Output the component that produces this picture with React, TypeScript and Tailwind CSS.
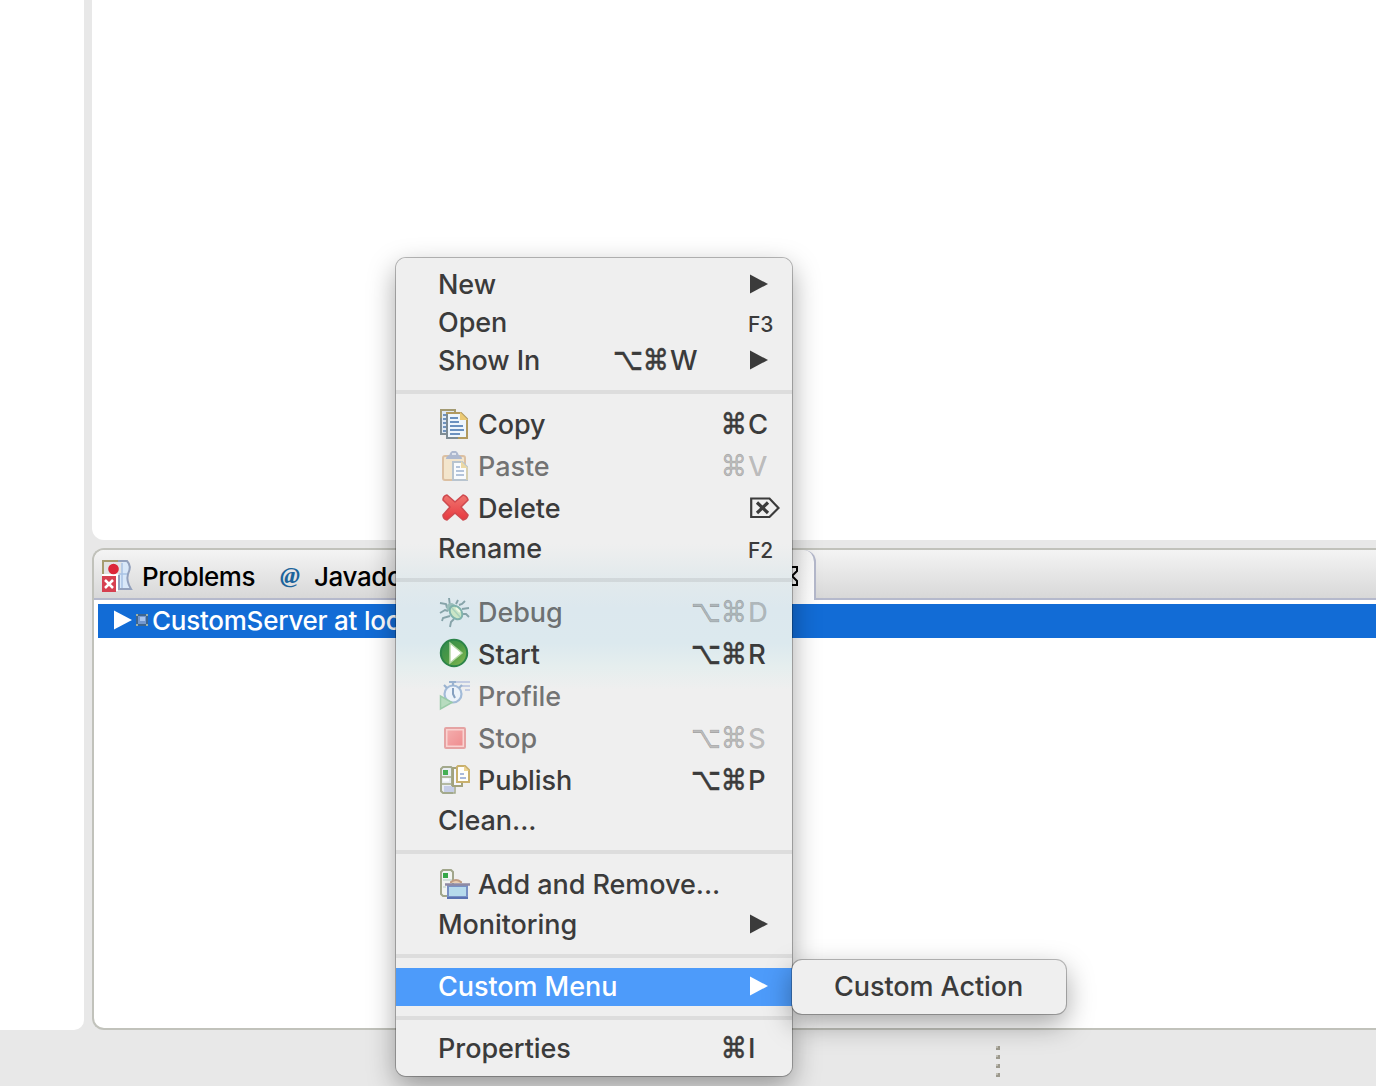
import type { ReactNode } from "react";

const CopyIcon = () => (
  <svg width="32" height="32" viewBox="0 0 32 32" fill="none">
    <path d="M3 2H17V26H3Z" fill="#dfe9f5" stroke="#a39a72" strokeWidth="2" />
    <path d="M3 10V26H9" stroke="#7f8d94" strokeWidth="2" />
    <path d="M5 7h3M5 11h3M5 15h3M5 19h3M5 23h3" stroke="#6f93bd" strokeWidth="2" />
    <path d="M9 5H23L29 11V30H9Z" fill="#eef6fd" stroke="#b19a60" strokeWidth="2" />
    <path d="M9 6V30H20" stroke="#7d8b93" strokeWidth="2" />
    <path d="M22 4L30 12H22Z" fill="#ecca74" />
    <path d="M12 10h8M12 14h9M12 18h13M12 22h14M12 26h10" stroke="#6a91c0" strokeWidth="2" />
  </svg>
);

const PasteIcon = () => (
  <svg width="32" height="32" viewBox="0 0 32 32" fill="none">
    <rect x="5" y="6" width="22" height="24" rx="2" fill="#f3e5cc" stroke="#dcc0a2" strokeWidth="2" />
    <path d="M8 9C8 5 12 6 12 3L14 1H18L20 3C20 6 24 5 24 9Z" fill="#aeb9cf" />
    <rect x="14" y="3" width="4" height="2" fill="#dfe4ee" />
    <path d="M15 12H24L29 17V30H15Z" fill="#f9fbfd" stroke="#b8c4cf" strokeWidth="2" />
    <path d="M29 18V30" stroke="#d6cfb0" strokeWidth="2" />
    <path d="M23 11L30 18H23Z" fill="#ecd9a4" />
    <path d="M18 17h4M18 21h8M18 25h8" stroke="#b4c4da" strokeWidth="2" />
  </svg>
);

const DeleteIcon = () => (
  <svg width="32" height="32" viewBox="0 0 32 32" fill="none">
    <defs>
      <linearGradient id="del" x1="0" y1="0" x2="0" y2="1">
        <stop offset="0" stopColor="#ef7670" />
        <stop offset="1" stopColor="#e8383f" />
      </linearGradient>
    </defs>
    <path
      d="M9 3L17 10L25 3Q29 4 30 8L23 15L30 23Q29 27 25 28L17 21L9 28Q5 27 5 23L12 15L5 8Q5 4 9 3Z"
      fill="url(#del)"
      stroke="#cf4a4f"
      strokeWidth="1.600"
      strokeLinejoin="round"
    />
  </svg>
);

const DebugIcon = () => (
  <svg width="32" height="32" viewBox="0 0 32 32" fill="none">
    <path
      d="M12 10L11 2M18 8L20 4M9 12L8 8L2 7M10 15L7 14L2 17M12 20L5 22L4 25M16 23L13 26L12 31M21 9L24 8L27 5M24 13L31 12M24 18L28 18L31 21"
      stroke="#86a3a9"
      strokeWidth="1.900"
    />
    <circle cx="13" cy="11.500" r="4.500" fill="#9abdba" />
    <ellipse cx="18" cy="16.500" rx="5.500" ry="7.500" transform="rotate(-38 18 16.500)" fill="#cbe6c6" stroke="#7fb2ac" strokeWidth="2" />
    <path d="M14 12L22 21" stroke="#a9d0bd" strokeWidth="1.500" />
    <path d="M18 12L22 16" stroke="#eff8e4" strokeWidth="2" />
  </svg>
);

const StartIcon = () => (
  <svg width="32" height="32" viewBox="0 0 32 32" fill="none">
    <defs>
      <linearGradient id="run" x1="0" y1="0" x2="1" y2="1">
        <stop offset="0" stopColor="#2f8a50" />
        <stop offset=".5" stopColor="#4c9a45" />
        <stop offset="1" stopColor="#8fbf55" />
      </linearGradient>
    </defs>
    <circle cx="16" cy="15" r="13.200" fill="url(#run)" stroke="#2c8449" strokeWidth="2" />
    <path d="M12 5L24 15L12 25Z" fill="#fff" stroke="#b7d8a7" strokeWidth="1.500" />
  </svg>
);

const ProfileIcon = () => (
  <svg width="32" height="32" viewBox="0 0 32 32" fill="none">
    <path d="M18 2h14M24 6h8M27 10h5" stroke="#c3cce2" strokeWidth="2" />
    <circle cx="15" cy="14" r="8.500" fill="#edf3fa" stroke="#a3bbd8" strokeWidth="2.200" />
    <path d="M11 2h7M15 2v4M6 5l3 3M24 5l-3 3" stroke="#9ab2cf" strokeWidth="2.200" />
    <path d="M15 8v6l2 4" stroke="#86a0c0" strokeWidth="2" />
    <path d="M2.500 16V29L14 22.500Z" fill="#b7dcbf" stroke="#9acba8" strokeWidth="1.500" />
  </svg>
);

const StopIcon = () => (
  <svg width="32" height="32" viewBox="0 0 32 32" fill="none">
    <defs>
      <linearGradient id="stop" x1="0" y1="0" x2="1" y2="1">
        <stop offset="0" stopColor="#f4acac" />
        <stop offset="1" stopColor="#ef8e90" />
      </linearGradient>
    </defs>
    <rect x="7" y="6" width="20" height="20" rx="1" fill="#f9d2d0" stroke="#e5a3a3" strokeWidth="2" />
    <rect x="9.500" y="8.500" width="15" height="15" fill="url(#stop)" />
  </svg>
);

const PublishIcon = () => (
  <svg width="32" height="32" viewBox="0 0 32 32" fill="none">
    <path d="M5 3H13L14 4V29H5L3 27V5Z" fill="#e9edf2" stroke="#a3a98c" strokeWidth="2" />
    <rect x="5" y="6" width="5" height="5" fill="#45b053" />
    <path d="M4 13H13M4 20H13" stroke="#b4baa3" strokeWidth="2" />
    <path d="M5 16h6" stroke="#fbfcff" strokeWidth="3" />
    <path d="M6 22H16V28H6Z" fill="#c5cde6" />
    <path d="M14 22H17V29H10" stroke="#a3a98c" strokeWidth="1.500" />
    <path d="M15 4H24V22H15Z" fill="#f5f7ff" stroke="#a3a27c" strokeWidth="2" />
    <path d="M20 2H27L31 6V18H19V3Z" fill="#fffef9" stroke="#c9b06c" strokeWidth="2" />
    <path d="M26 2V7H31Z" fill="#eed491" />
    <path d="M22 10h4M22 14h6" stroke="#a9b9dc" strokeWidth="2" />
  </svg>
);

const AddRemoveIcon = () => (
  <svg width="32" height="32" viewBox="0 0 32 32" fill="none">
    <path d="M5 2H13L15 4V28H5L3 26V4Z" fill="#f2f4f2" stroke="#a1a68b" strokeWidth="2" />
    <rect x="5" y="5" width="5" height="5" fill="#35a747" />
    <path d="M5 12h9M5 19h3" stroke="#d3dfda" strokeWidth="2" />
    <path d="M13 15V14Q18 10 23 14V15" fill="#e9cfb4" stroke="#c09d83" strokeWidth="2" />
    <path d="M10 18H29V29H10Z" fill="#b6daec" stroke="#7890c4" strokeWidth="2" />
    <path d="M7 16.500H32" stroke="#8f8aa3" strokeWidth="2.500" />
    <path d="M9 30H30" stroke="#5a72b2" strokeWidth="2" />
  </svg>
);

const ProblemsIcon = () => (
  <svg width="32" height="32" viewBox="0 0 32 32" fill="none">
    <path d="M2 1H25Q30 6 26 14Q24 21 29 29H17V1" fill="#d9e8f9" stroke="#93a1bd" strokeWidth="2" />
    <path d="M1 14V1H16" stroke="#a59c70" strokeWidth="2" />
    <path d="M2 2H20V15H2Z" fill="#e2e3e4" />
    <path d="M20 3V28M17 14H25" stroke="#a9c3e5" strokeWidth="1.500" />
    <path d="M0 14H16V31H0Z" fill="#fff" />
    <circle cx="11.500" cy="9" r="5.300" fill="#dc2638" />
    <rect y="16" width="14" height="16" fill="#d64050" />
    <path d="M3 20L11 28M11 20L3 28" stroke="#fff" strokeWidth="2.500" />
  </svg>
);

const Triangle = () => (
  <svg width="18" height="20" viewBox="0 0 18 20" fill="currentColor">
    <path d="M0 .5L18 10L0 19.500Z" />
  </svg>
);

const ForwardDelete = () => (
  <svg width="30" height="22" viewBox="0 0 30 22" fill="none" stroke="currentColor" strokeWidth="2.200">
    <path d="M1.200 1.500H19.500L28.500 11L19.500 20H1.200Z" />
    <path d="M7 5.500L18 16M18 5.500L7 16" strokeWidth="3.200" />
  </svg>
);

type Item = {
  label: string;
  icon?: ReactNode;
  keys?: string;
  letter?: string;
  fn?: string;
  arrow?: boolean;
  off?: boolean;
  active?: boolean;
};

const groups: Item[][] = [
  [
    { label: "New", arrow: true },
    { label: "Open", fn: "F3" },
    { label: "Show In", keys: "⌥⌘", letter: "W", arrow: true },
  ],
  [
    { label: "Copy", icon: <CopyIcon />, keys: "⌘", letter: "C" },
    { label: "Paste", icon: <PasteIcon />, keys: "⌘", letter: "V", off: true },
    { label: "Delete", icon: <DeleteIcon />, keys: "⌦" },
    { label: "Rename", fn: "F2" },
  ],
  [
    { label: "Debug", icon: <DebugIcon />, keys: "⌥⌘", letter: "D", off: true },
    { label: "Start", icon: <StartIcon />, keys: "⌥⌘", letter: "R" },
    { label: "Profile", icon: <ProfileIcon />, off: true },
    { label: "Stop", icon: <StopIcon />, keys: "⌥⌘", letter: "S", off: true },
    { label: "Publish", icon: <PublishIcon />, keys: "⌥⌘", letter: "P" },
    { label: "Clean..." },
  ],
  [
    { label: "Add and Remove...", icon: <AddRemoveIcon /> },
    { label: "Monitoring", arrow: true },
  ],
  [{ label: "Custom Menu", arrow: true, active: true }],
  [{ label: "Properties", keys: "⌘", letter: "I" }],
];

const Shortcut = ({ item }: { item: Item }) => {
  if (item.fn) return <span className="w-[44px] pt-[5px] text-[21px] font-medium leading-none tracking-[-0.2px]">{item.fn}</span>;
  if (item.keys === "⌦")
    return (
      <span className="w-[42px]">
        <ForwardDelete />
      </span>
    );
  return (
    <span className={`flex items-center leading-[38px] ${item.off ? "text-[#3b3b3b]/30" : ""}`}>
      {[...(item.keys ?? "")].map((k) => (
        <span
          key={k}
          className={`inline-block origin-[50%_55%] font-['DejaVu_Sans'] text-[26px] [-webkit-text-stroke:0.5px] ${
            k === "⌥" ? "w-[30px] scale-y-[1.2]" : "w-[26px] scale-y-[1.1]"
          }`}
        >
          {k}
        </span>
      ))}
      <span className={`pl-px text-[27.5px] ${item.arrow ? "w-[81px]" : "w-[45px]"}`}>{item.letter}</span>
    </span>
  );
};

const MenuRow = ({ item }: { item: Item }) => (
  <div
    className={`flex items-center pl-[42px] ${item.icon ? "h-[42px]" : "h-[38px]"} ${
      item.active ? "bg-[#4d9bfa] text-white" : ""
    }`}
  >
    {item.icon && <span className="mr-2 -mt-0.5 h-8 w-8">{item.icon}</span>}
    <span className={`flex-1 whitespace-nowrap ${item.off ? "text-[#3b3b3b]/70" : ""}`}>{item.label}</span>
    <div className="-mt-0.5 flex items-center">
      {(item.keys || item.fn) && <Shortcut item={item} />}
      {item.arrow && (
        <span className="w-[42px]">
          <Triangle />
        </span>
      )}
    </div>
  </div>
);

export default function App() {
  return (
    <div className="relative flex h-[1086px] w-[1376px] flex-col overflow-hidden bg-[#e8e8e8] font-['Inter',sans-serif] text-[27px] font-[450] tracking-[-0.06px] text-black">
      <div className="flex h-[1030px] gap-2">
        <div className="w-[84px] rounded-br-[10px] bg-white" />
        <div className="flex flex-1 flex-col gap-2">
          <div className="h-[540px] rounded-bl-[12px] bg-white" />
          <div className="flex flex-1 flex-col overflow-hidden rounded-l-[12px] border-2 border-r-0 border-[#c1c2bb] bg-white">
            <div className="flex h-[50px] border-b-2 border-[#b5b9cc] bg-linear-to-b from-[#f4f4f4] to-[#d8d8d8]">
              <div className="flex w-[506px] items-center pl-[8px] pt-1">
                <ProblemsIcon />
                <span className="ml-2 w-[138px] whitespace-nowrap text-[26px] tracking-[-0.5px]">Problems</span>
                <span className="w-[34px] pb-[3px] font-['Liberation_Serif'] text-[24px] font-bold italic text-[#1c649b]">@</span>
                <span className="whitespace-nowrap text-[26px] tracking-[-0.4px]">Javadoc</span>
              </div>
              <div className="flex h-[50px] w-[216px] items-center justify-end rounded-tr-[12px] border-r-2 border-[#b5b9cc] bg-linear-to-b from-[#f8f8f8] to-white pr-[16px] pt-0.5">
                <svg width="20" height="20" viewBox="0 0 20 20" fill="none" stroke="#000" strokeWidth="2">
                  <path d="M1 1H6L10 6L14 1H19V5L14 10L19 15V19H14L10 14L6 19H1V15L6 10L1 5Z" />
                </svg>
              </div>
            </div>
            <div className="ml-1 mt-1 flex h-[34px] items-center bg-[#126cd6] pl-4 text-white">
              <span className="-mt-0.5">
                <Triangle />
              </span>
              <svg className="ml-1 mr-1 -mt-0.5" width="12" height="12" viewBox="0 0 12 12">
                <rect width="12" height="12" fill="#3d6590" />
                <rect x="2" y="2" width="8" height="8" fill="#7297cf" />
                <rect x="4" y="3" width="5" height="4" fill="#a6c4ef" />
                <path d="M0 0h2v2H0zM10 0h2v2h-2zM0 10h2v2H0zM10 10h2v2h-2z" fill="#9bb0a4" />
              </svg>
              <span className="-mt-0.5 whitespace-nowrap text-[26px] tracking-[-0.25px]">CustomServer at localhost</span>
            </div>
          </div>
        </div>
      </div>
      <div className="flex flex-1 flex-col gap-[5px] pl-[996px] pt-4">
        {[0, 1, 2, 3].map((i) => (
          <span key={i} className="h-1 w-1 border-r-2 border-b-2 border-[#9c998d] bg-[#c0beb4]" />
        ))}
      </div>

      <div className="absolute left-[396px] top-[258px] h-[818px] w-[396px] overflow-hidden rounded-[10px] bg-[linear-gradient(180deg,#efefef_0px,#efefef_286px,#e3eaec_318px,#dce8ee_350px,#dce9ee_385px,#e5eeee_408px,#efefef_432px,#efefef_818px)] py-2 text-[#3b3b3b] shadow-[0_0_0_1px_rgba(0,0,0,0.26),0_10px_28px_rgba(0,0,0,0.36)]">
        {groups.map((g, i) => (
          <div key={i}>
            {i > 0 && <div className="my-2.5 h-1 bg-black/[0.075]" />}
            {g.map((item) => (
              <MenuRow key={item.label} item={item} />
            ))}
          </div>
        ))}
      </div>
      <div className="absolute left-[792px] top-[960px] flex h-[54px] w-[274px] items-center rounded-[10px] bg-[#efefef] pl-[42px] text-[#3b3b3b] shadow-[0_0_0_1px_rgba(0,0,0,0.26),0_10px_28px_rgba(0,0,0,0.36)]">
        <span className="whitespace-nowrap">Custom Action</span>
      </div>
    </div>
  );
}
